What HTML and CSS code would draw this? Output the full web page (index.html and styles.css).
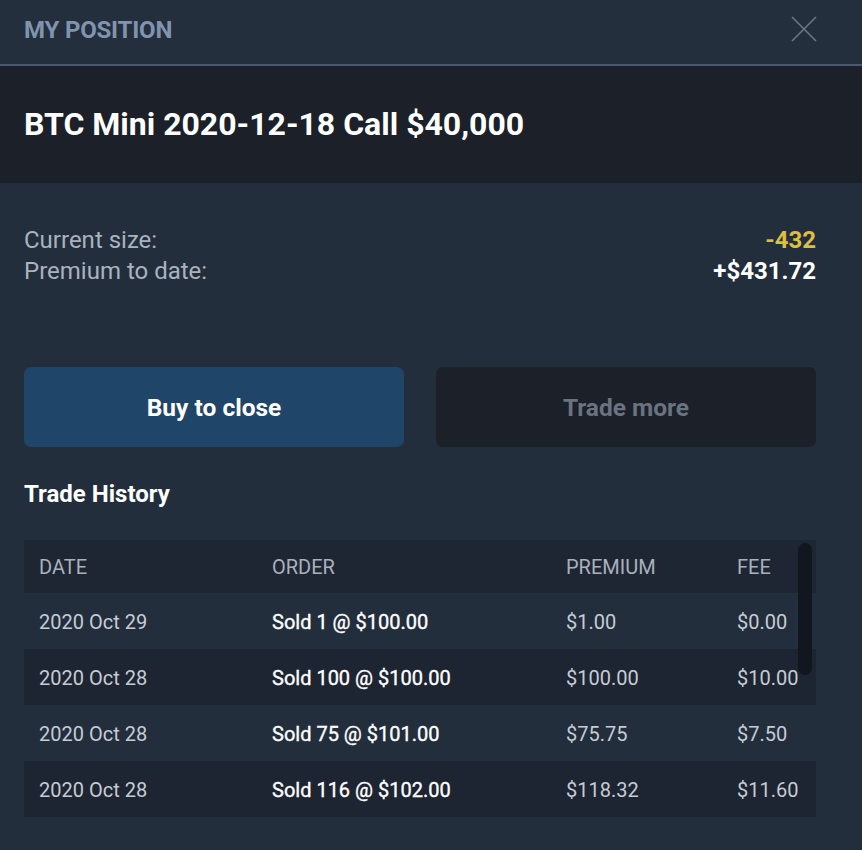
FILE: index.html
```html
<!DOCTYPE html>
<html>
<head>
<meta charset="utf-8">
<link rel="stylesheet" href="styles.css">
</head>
<body>
<div class="panel">
  <header class="topbar">
    <h1 class="panel-title">MY POSITION</h1>
    <button class="close" aria-label="Close">
      <svg width="26" height="26" viewBox="0 0 26 26"><path d="M1 1 L25 25 M25 1 L1 25" stroke="#6e7988" stroke-width="1.5" fill="none"/></svg>
    </button>
  </header>
  <section class="instrument">
    <h2 class="instrument-name">BTC Mini 2020-12-18 Call $40,000</h2>
  </section>
  <section class="body">
    <div class="stats">
      <div class="stat"><span class="label">Current size:</span><span class="value neg">-432</span></div>
      <div class="stat"><span class="label">Premium to date:</span><span class="value">+$431.72</span></div>
    </div>
    <div class="actions">
      <button class="btn btn-primary">Buy to close</button>
      <button class="btn btn-dark">Trade more</button>
    </div>
    <h3 class="history-title">Trade History</h3>
    <div class="table-wrap">
      <table class="history">
        <thead>
          <tr><th class="c-date">DATE</th><th class="c-order">ORDER</th><th class="c-prem">PREMIUM</th><th class="c-fee">FEE</th></tr>
        </thead>
        <tbody>
          <tr><td>2020 Oct 29</td><td class="order">Sold 1 @ $100.00</td><td>$1.00</td><td>$0.00</td></tr>
          <tr><td>2020 Oct 28</td><td class="order">Sold 100 @ $100.00</td><td>$100.00</td><td>$10.00</td></tr>
          <tr><td>2020 Oct 28</td><td class="order">Sold 75 @ $101.00</td><td>$75.75</td><td>$7.50</td></tr>
          <tr><td>2020 Oct 28</td><td class="order">Sold 116 @ $102.00</td><td>$118.32</td><td>$11.60</td></tr>
        </tbody>
      </table>
      <div class="scrollbar"></div>
    </div>
  </section>
</div>
</body>
</html>
```

FILE: styles.css
```css
* { box-sizing: border-box; }
html, body { margin: 0; padding: 0; }
body {
  background: #232e3d;
  font-family: Roboto, "Liberation Sans", Arial, sans-serif;
  width: 862px;
  height: 850px;
  overflow: hidden;
}
.panel { width: 862px; }
.topbar {
  height: 66px;
  display: flex;
  align-items: center;
  justify-content: space-between;
  padding: 0 45px 4px 24px;
  background: #242f3e;
  border-bottom: 2px solid #475870;
}
.panel-title {
  margin: 0;
  font-size: 24px;
  font-weight: 700;
  color: #8294ad;
  letter-spacing: -0.2px;
}
.close {
  background: none;
  border: 0;
  padding: 0;
  width: 26px;
  height: 26px;
  display: flex;
  margin-top: -2px;
}
.instrument {
  height: 117px;
  background: #1b2029;
  display: flex;
  align-items: center;
  padding: 0 24px 2px;
}
.instrument-name {
  margin: 0;
  font-size: 32px;
  font-weight: 700;
  color: #ffffff;
}
.body { padding: 41px 46px 0 24px; }
.stats { display: flex; flex-direction: column; }
.stat {
  display: flex;
  justify-content: space-between;
  align-items: center;
  height: 31px;
  font-size: 24px;
}
.label { color: #a9b2be; }
.value { color: #ffffff; font-weight: 700; }
.value.neg { color: #dcbf3b; }
.actions {
  display: flex;
  gap: 32px;
  margin-top: 81px;
}
.btn {
  flex: 1;
  height: 80px;
  border: 0;
  border-radius: 7px;
  font-family: inherit;
  font-size: 24.5px;
  font-weight: 700;
}
.btn-primary { background: #1f4568; color: #ffffff; }
.btn-dark { background: #1b2029; color: #6a7381; }
.history-title {
  margin: 34px 0 0;
  height: 26px;
  font-size: 24px;
  font-weight: 700;
  color: #ffffff;
  line-height: 26px;
}
.table-wrap { position: relative; margin-top: 33px; }
.history {
  width: 100%;
  border-collapse: collapse;
  table-layout: fixed;
  font-size: 20px;
}
.history th, .history td {
  text-align: left;
  padding: 0 0 0 15px;
  white-space: nowrap;
}
.history th {
  height: 53px;
  font-weight: 400;
  color: #a8b1bc;
  background: #1f2633;
}
.history td { height: 56px; color: #c5ccd5; padding-top: 2px; }
.history td.order { color: #ffffff; font-weight: 400; -webkit-text-stroke: 0.35px #ffffff; }
.history tbody tr:nth-child(even) td { background: #1e2532; }
.c-date { width: 233px; }
.c-order { width: 294px; }
.c-prem { width: 171px; }
.scrollbar {
  position: absolute;
  right: 4px;
  top: 3px;
  width: 14px;
  height: 132px;
  border-radius: 7px;
  background: #10151d;
  opacity: 0.9;
}
```
